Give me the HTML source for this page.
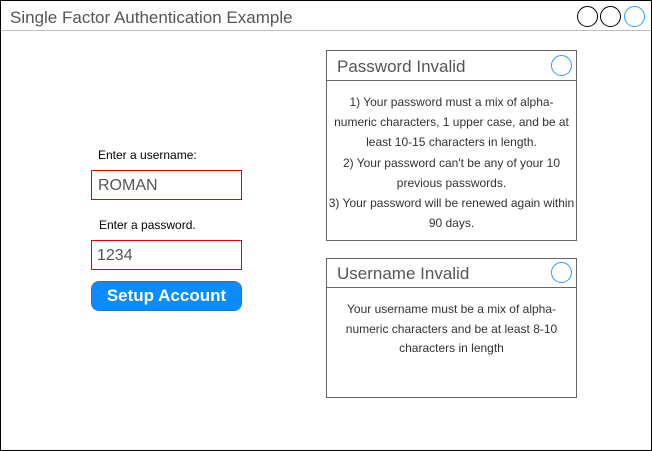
<!DOCTYPE html>
<html><head><style>
body{margin:0;width:652px;height:451px;position:relative;font-family:"Liberation Sans",Arial,sans-serif;background:#fff;overflow:hidden}
.a{position:absolute;box-sizing:border-box}
.c{position:absolute;width:21px;height:21px;border-radius:50%;box-sizing:border-box;border:1px solid #000}
.t{font-size:12px;color:#333;text-align:center;line-height:20.2px}
</style></head><body>
<div class="a" style="left:0;top:0;width:652px;height:451px;border:1px solid #000"></div>
<div class="a" style="left:1px;top:30px;width:650px;height:1px;background:#c0c0c0"></div>
<div class="a" style="left:10px;top:8px;font-size:17px;color:#555">Single Factor Authentication Example</div>
<div class="c" style="left:577px;top:6px"></div>
<div class="c" style="left:600px;top:6px"></div>
<div class="c" style="left:624px;top:6px;border-color:#3399ff"></div>

<div class="a" style="left:98px;top:148px;font-size:12px;color:#000">Enter a username:</div>
<div class="a" style="left:91px;top:170px;width:151px;height:30px;border:1px solid #e00000;font-size:16px;color:#555;padding:6px 0 0 6px">ROMAN</div>
<div class="a" style="left:99px;top:218px;font-size:12px;color:#000">Enter a password.</div>
<div class="a" style="left:91px;top:240px;width:151px;height:30px;border:1px solid #e00000;font-size:16px;color:#555;padding:6px 0 0 5px">1234</div>
<div class="a" style="left:91px;top:281px;width:151px;height:30px;border:1px solid #3a6ea5;border-radius:8px;background:#0a8cff;color:#fff;font-weight:bold;font-size:17px;text-align:center;line-height:28px">Setup Account</div>

<div class="a" style="left:326px;top:50px;width:251px;height:191px;border:1px solid #666"></div>
<div class="a" style="left:326px;top:80px;width:251px;height:1px;background:#666"></div>
<div class="a" style="left:337px;top:57px;font-size:17px;color:#555">Password Invalid</div>
<div class="c" style="left:551px;top:55px;border-color:#3399ff"></div>
<div class="a t" style="left:327px;top:92px;width:249px">1) Your password must a mix of alpha-<br>numeric characters, 1 upper case, and be at<br>least 10-15 characters in length.<br>2) Your password can't be any of your 10<br>previous passwords.<br>3) Your password will be renewed again within<br>90 days.</div>

<div class="a" style="left:326px;top:258px;width:251px;height:140px;border:1px solid #666"></div>
<div class="a" style="left:326px;top:287px;width:251px;height:1px;background:#666"></div>
<div class="a" style="left:337px;top:264px;font-size:17px;color:#555">Username Invalid</div>
<div class="c" style="left:551px;top:262px;border-color:#3399ff"></div>
<div class="a t" style="left:327px;top:300px;width:249px;line-height:19.5px">Your username must be a mix of alpha-<br>numeric characters and be at least 8-10<br>characters in length</div>
</body></html>
